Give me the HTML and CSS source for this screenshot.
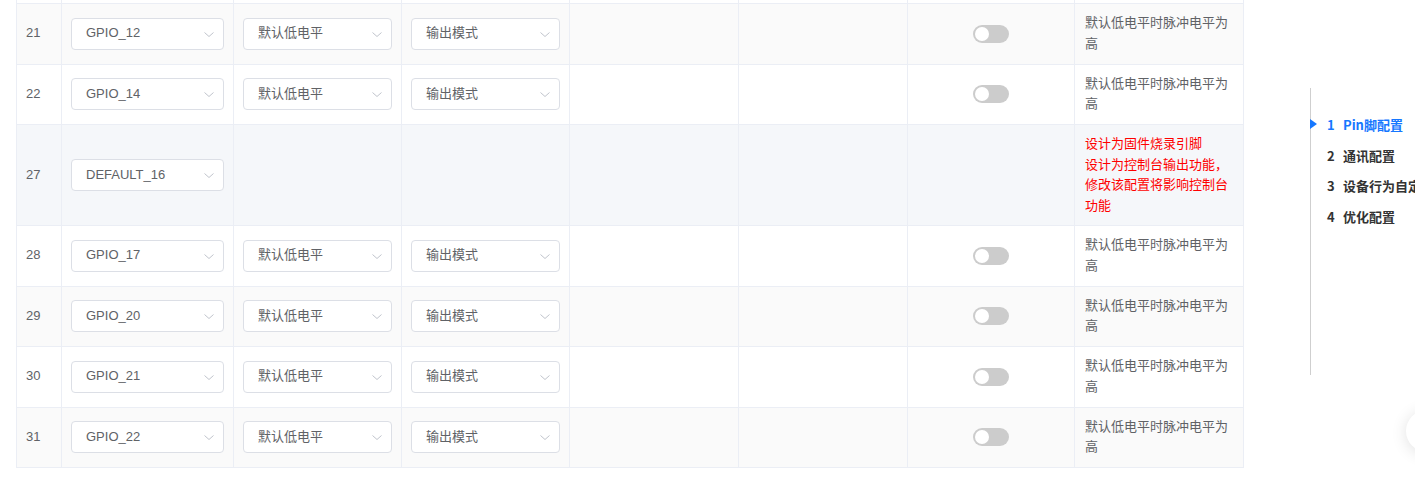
FILE: index.html
```html
<!DOCTYPE html>
<html lang="zh-CN">
<head>
<meta charset="utf-8">
<title>Pin脚配置</title>
<link rel="stylesheet" href="styles.css">
</head>
<body>
<div class="page">
  <div class="table">
    <div class="row frag">
      <div class="cell"></div><div class="cell"></div><div class="cell"></div><div class="cell"></div>
      <div class="cell"></div><div class="cell"></div><div class="cell"></div><div class="cell"></div>
    </div>

    <div class="row stripe">
      <div class="cell num">21</div>
      <div class="cell"><div class="select"><span>GPIO_12</span><svg class="arrow" viewBox="0 0 10 5"><polyline points="0.5,0.5 5,4.5 9.5,0.5"/></svg></div></div>
      <div class="cell"><div class="select"><span>默认低电平</span><svg class="arrow" viewBox="0 0 10 5"><polyline points="0.5,0.5 5,4.5 9.5,0.5"/></svg></div></div>
      <div class="cell"><div class="select"><span>输出模式</span><svg class="arrow" viewBox="0 0 10 5"><polyline points="0.5,0.5 5,4.5 9.5,0.5"/></svg></div></div>
      <div class="cell"></div>
      <div class="cell"></div>
      <div class="cell center"><span class="switch"><span class="knob"></span></span></div>
      <div class="cell desc">默认低电平时脉冲电平为高</div>
    </div>

    <div class="row">
      <div class="cell num">22</div>
      <div class="cell"><div class="select"><span>GPIO_14</span><svg class="arrow" viewBox="0 0 10 5"><polyline points="0.5,0.5 5,4.5 9.5,0.5"/></svg></div></div>
      <div class="cell"><div class="select"><span>默认低电平</span><svg class="arrow" viewBox="0 0 10 5"><polyline points="0.5,0.5 5,4.5 9.5,0.5"/></svg></div></div>
      <div class="cell"><div class="select"><span>输出模式</span><svg class="arrow" viewBox="0 0 10 5"><polyline points="0.5,0.5 5,4.5 9.5,0.5"/></svg></div></div>
      <div class="cell"></div>
      <div class="cell"></div>
      <div class="cell center"><span class="switch"><span class="knob"></span></span></div>
      <div class="cell desc">默认低电平时脉冲电平为高</div>
    </div>

    <div class="row hover">
      <div class="cell num">27</div>
      <div class="cell"><div class="select"><span>DEFAULT_16</span><svg class="arrow" viewBox="0 0 10 5"><polyline points="0.5,0.5 5,4.5 9.5,0.5"/></svg></div></div>
      <div class="cell"></div>
      <div class="cell"></div>
      <div class="cell"></div>
      <div class="cell"></div>
      <div class="cell"></div>
      <div class="cell desc warn">设计为固件烧录引脚<br>设计为控制台输出功能，修改该配置将影响控制台功能</div>
    </div>

    <div class="row">
      <div class="cell num">28</div>
      <div class="cell"><div class="select"><span>GPIO_17</span><svg class="arrow" viewBox="0 0 10 5"><polyline points="0.5,0.5 5,4.5 9.5,0.5"/></svg></div></div>
      <div class="cell"><div class="select"><span>默认低电平</span><svg class="arrow" viewBox="0 0 10 5"><polyline points="0.5,0.5 5,4.5 9.5,0.5"/></svg></div></div>
      <div class="cell"><div class="select"><span>输出模式</span><svg class="arrow" viewBox="0 0 10 5"><polyline points="0.5,0.5 5,4.5 9.5,0.5"/></svg></div></div>
      <div class="cell"></div>
      <div class="cell"></div>
      <div class="cell center"><span class="switch"><span class="knob"></span></span></div>
      <div class="cell desc">默认低电平时脉冲电平为高</div>
    </div>

    <div class="row stripe">
      <div class="cell num">29</div>
      <div class="cell"><div class="select"><span>GPIO_20</span><svg class="arrow" viewBox="0 0 10 5"><polyline points="0.5,0.5 5,4.5 9.5,0.5"/></svg></div></div>
      <div class="cell"><div class="select"><span>默认低电平</span><svg class="arrow" viewBox="0 0 10 5"><polyline points="0.5,0.5 5,4.5 9.5,0.5"/></svg></div></div>
      <div class="cell"><div class="select"><span>输出模式</span><svg class="arrow" viewBox="0 0 10 5"><polyline points="0.5,0.5 5,4.5 9.5,0.5"/></svg></div></div>
      <div class="cell"></div>
      <div class="cell"></div>
      <div class="cell center"><span class="switch"><span class="knob"></span></span></div>
      <div class="cell desc">默认低电平时脉冲电平为高</div>
    </div>

    <div class="row">
      <div class="cell num">30</div>
      <div class="cell"><div class="select"><span>GPIO_21</span><svg class="arrow" viewBox="0 0 10 5"><polyline points="0.5,0.5 5,4.5 9.5,0.5"/></svg></div></div>
      <div class="cell"><div class="select"><span>默认低电平</span><svg class="arrow" viewBox="0 0 10 5"><polyline points="0.5,0.5 5,4.5 9.5,0.5"/></svg></div></div>
      <div class="cell"><div class="select"><span>输出模式</span><svg class="arrow" viewBox="0 0 10 5"><polyline points="0.5,0.5 5,4.5 9.5,0.5"/></svg></div></div>
      <div class="cell"></div>
      <div class="cell"></div>
      <div class="cell center"><span class="switch"><span class="knob"></span></span></div>
      <div class="cell desc">默认低电平时脉冲电平为高</div>
    </div>

    <div class="row stripe">
      <div class="cell num">31</div>
      <div class="cell"><div class="select"><span>GPIO_22</span><svg class="arrow" viewBox="0 0 10 5"><polyline points="0.5,0.5 5,4.5 9.5,0.5"/></svg></div></div>
      <div class="cell"><div class="select"><span>默认低电平</span><svg class="arrow" viewBox="0 0 10 5"><polyline points="0.5,0.5 5,4.5 9.5,0.5"/></svg></div></div>
      <div class="cell"><div class="select"><span>输出模式</span><svg class="arrow" viewBox="0 0 10 5"><polyline points="0.5,0.5 5,4.5 9.5,0.5"/></svg></div></div>
      <div class="cell"></div>
      <div class="cell"></div>
      <div class="cell center"><span class="switch"><span class="knob"></span></span></div>
      <div class="cell desc">默认低电平时脉冲电平为高</div>
    </div>
  </div>

  <nav class="anchor">
    <div class="anchor-item active"><span class="anchor-num">1</span><span>Pin脚配置</span></div>
    <div class="anchor-item"><span class="anchor-num">2</span><span>通讯配置</span></div>
    <div class="anchor-item"><span class="anchor-num">3</span><span>设备行为自定义</span></div>
    <div class="anchor-item"><span class="anchor-num">4</span><span>优化配置</span></div>
  </nav>
</div>
<div class="float-btn"></div>
</body>
</html>
```

FILE: styles.css
```css
html, body {
  margin: 0;
  padding: 0;
  background: #fff;
  overflow: hidden;
  height: 486px;
}
body {
  font-family: "Liberation Sans", "Noto Sans CJK SC", sans-serif;
  font-size: 13px;
  color: #606266;
}
.page {
  display: flex;
  align-items: flex-start;
  white-space: nowrap;
}
.table {
  margin-left: 16px;
  border-left: 1px solid #ebeef5;
  flex: none;
  width: 1228px;
  box-sizing: border-box;
  white-space: normal;
}
.row {
  display: grid;
  grid-template-columns: 45px 172px 168px 168px 169px 169px 167px 169px;
  border-bottom: 1px solid #ebeef5;
  background: #fff;
}
.row.stripe { background: #fafafa; }
.row.hover { background: #f5f7fa; }
.row.frag .cell { height: 3px; padding: 0; }
.cell {
  box-sizing: border-box;
  border-right: 1px solid #ebeef5;
  padding: 9px;
  display: flex;
  align-items: center;
  line-height: 20.75px;
  min-width: 0;
}
.cell.center { justify-content: center; }
.cell.num { padding-left: 9px; }
.cell.desc {
  display: block;
  padding: 9px 10px;
}
.cell.warn {
  color: #ff0000;
  line-height: 20.5px;
}
.select {
  flex: 1;
  height: 32px;
  box-sizing: border-box;
  border: 1px solid #dcdfe6;
  border-radius: 4px;
  background: #fff;
  display: flex;
  align-items: center;
  justify-content: space-between;
  padding: 0 9px 0 14px;
  color: #606266;
}
.arrow {
  width: 10px;
  height: 5px;
  fill: none;
  stroke: #c0c4cc;
  stroke-width: 1;
  margin-top: 1px;
}
.switch {
  width: 36px;
  height: 18px;
  border-radius: 9px;
  background: #cccccc;
  display: flex;
  align-items: center;
  padding: 0 2px;
  box-sizing: border-box;
}
.knob {
  width: 14px;
  height: 14px;
  border-radius: 50%;
  background: #fff;
}
.anchor {
  flex: none;
  margin-left: 66px;
  margin-top: 88px;
  height: 287px;
  border-left: 1px solid #cfcfcf;
  padding-top: 25px;
  box-sizing: border-box;
  font-family: "Noto Sans CJK SC", "Liberation Sans", sans-serif;
  font-size: 13px;
  font-weight: bold;
  color: #333;
}
.anchor-item {
  position: relative;
  height: 30.5px;
  line-height: 24px;
  padding-left: 16px;
  display: flex;
}
.anchor-num {
  width: 16px;
}
.anchor-item.active {
  color: #1677ff;
}
.anchor-item.active::before {
  content: "";
  position: absolute;
  left: -1px;
  top: 6px;
  border-left: 7px solid #1677ff;
  border-top: 5.5px solid transparent;
  border-bottom: 5.5px solid transparent;
}
.float-btn {
  position: fixed;
  left: 1406px;
  top: 410px;
  width: 42px;
  height: 42px;
  border-radius: 50%;
  background: #fff;
  box-shadow: 0 2px 16px rgba(0, 0, 0, 0.12);
}
```
